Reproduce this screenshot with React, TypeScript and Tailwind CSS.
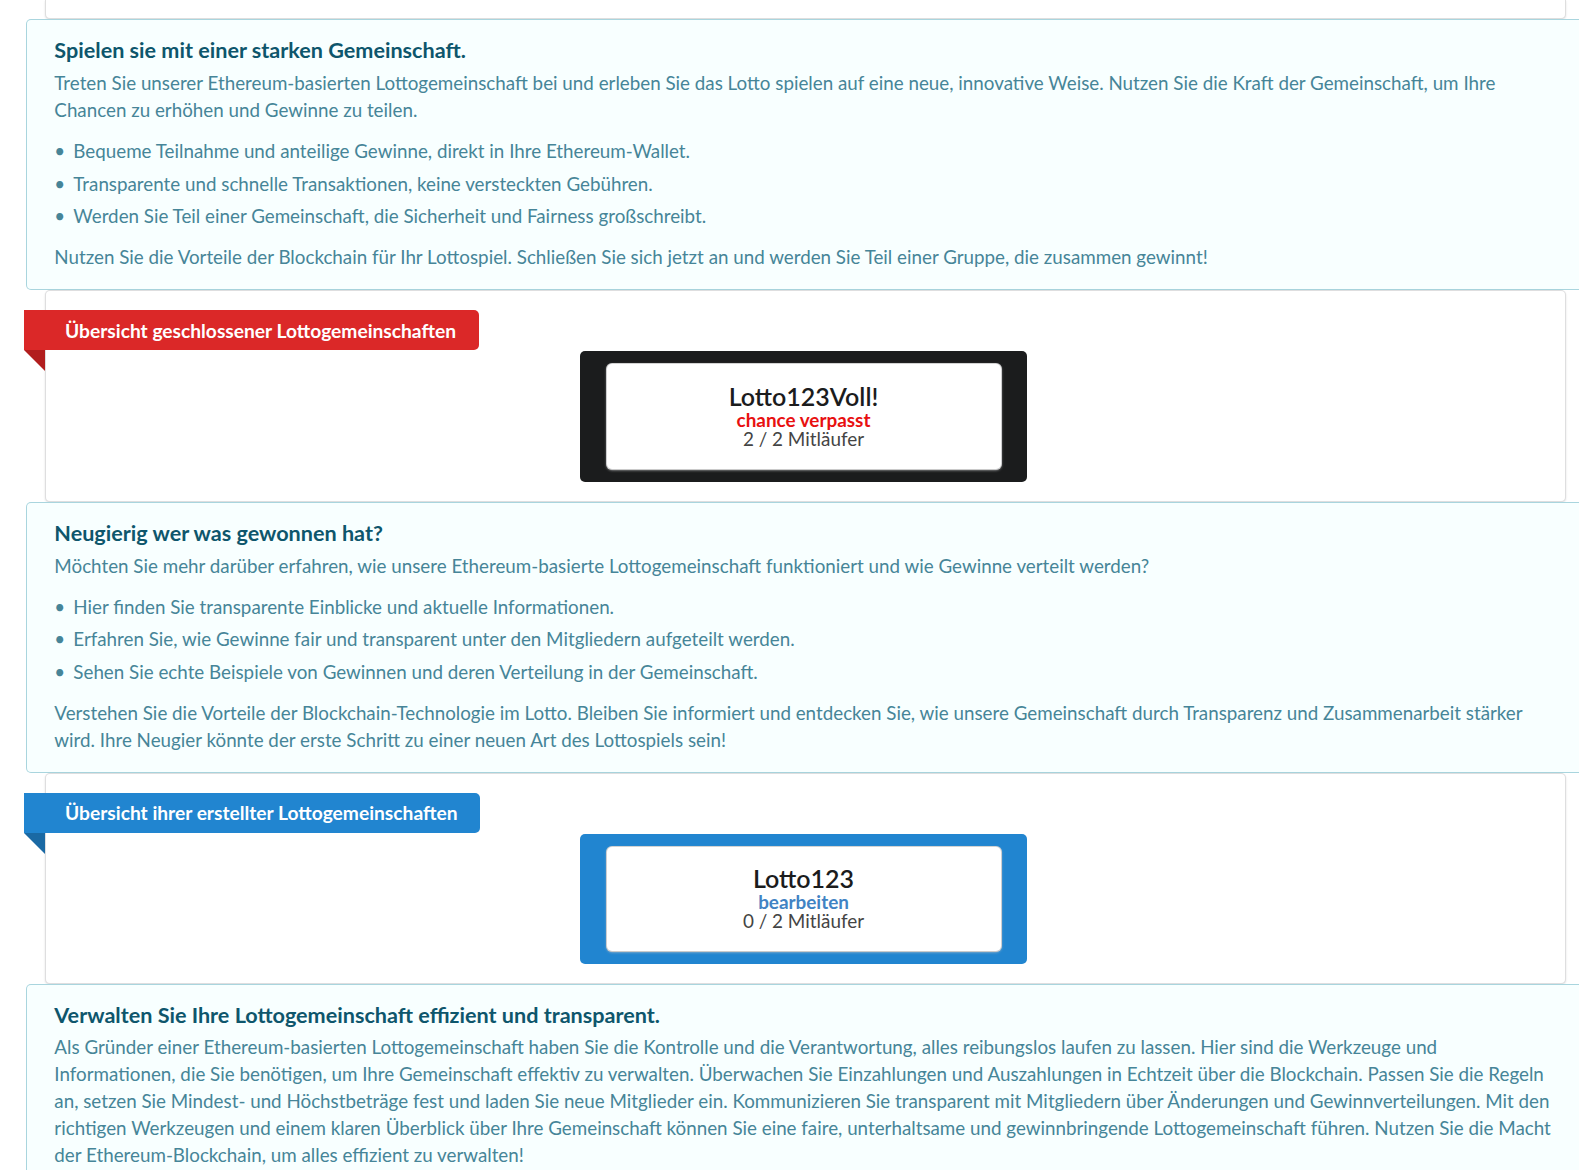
import React from "react";

function Message({
  title,
  children,
}: {
  title: string;
  children: React.ReactNode;
}) {
  return (
    <div className="-mx-[19px] rounded-[5px] bg-[#f8ffff] px-[28.35px] pb-[20px] pt-[19px] text-[18.8px] leading-[27px] text-[#468598] shadow-[inset_0_0_0_1px_#a9d5de]">
      <div className="-mt-px text-[21.6px] font-bold leading-[27px] text-[#0e566c]">
        {title}
      </div>
      {children}
    </div>
  );
}

function List({ items }: { items: string[] }) {
  return (
    <ul className="mt-[14px]">
      {items.map((t, i) => (
        <li
          key={i}
          className={
            "relative ml-[19px] " + (i === items.length - 1 ? "mb-0" : "mb-[5.6px]")
          }
        >
          <span className="absolute -left-[19px] top-0">•</span>
          {t}
        </li>
      ))}
    </ul>
  );
}

function Segment({
  label,
  color,
  fold,
  boxColor,
  title,
  sub,
  subColor,
  count,
}: {
  label: string;
  color: string;
  fold: string;
  boxColor: string;
  title: string;
  sub: string;
  subColor: string;
  count: string;
}) {
  return (
    <div className="rounded-[5px] border border-[rgba(34,36,38,0.15)] bg-white p-[19px] shadow-[0_1px_2px_0_rgba(34,36,38,0.15)]">
      <div
        className={
          "relative -ml-[41px] w-max rounded-r-[5px] py-[10.5px] pl-[41px] pr-[22.5px] text-[19.2px] font-bold leading-[19px] text-white " +
          color
        }
      >
        {label}
        <span
          className={
            "absolute left-0 top-full h-0 w-0 border-solid border-transparent border-l-0 border-t-0 border-r-[21px] border-b-[21px] " +
            fold
          }
        />
      </div>
      <div
        className={
          "relative right-[2px] mx-auto mt-px w-[447px] rounded-[5px] px-[26.5px] py-[13px] " +
          boxColor
        }
      >
        <div className="flex h-[104.5px] flex-col items-center rounded-[5px] bg-white pt-[17.5px] shadow-[0_1px_3px_0_#c4c4c5,0_0_0_1px_#d4d4d5]">
          <div className="text-[25px] font-semibold leading-[28px] text-[#1b1c1d]">
            {title}
          </div>
          <div className={"text-[18.9px] font-bold leading-[19px] " + subColor}>
            {sub}
          </div>
          <div className="text-[18.9px] leading-[19px] text-[#444]">{count}</div>
        </div>
      </div>
    </div>
  );
}

export default function App() {
  return (
    <div className="w-full overflow-hidden bg-white font-['Lato',sans-serif]">
      <div className="ml-[45px] w-[1521px]">
        <div className="h-[19px] rounded-b-[5px] border border-t-0 border-[rgba(34,36,38,0.15)] bg-white shadow-[0_1px_2px_0_rgba(34,36,38,0.15)]" />

        <Message title="Spielen sie mit einer starken Gemeinschaft.">
          <p className="mt-[5px]">
            Treten Sie unserer Ethereum-basierten Lottogemeinschaft bei und erleben Sie das
            Lotto spielen auf eine neue, innovative Weise. Nutzen Sie die Kraft der
            Gemeinschaft, um Ihre Chancen zu erhöhen und Gewinne zu teilen.
          </p>
          <List
            items={[
              "Bequeme Teilnahme und anteilige Gewinne, direkt in Ihre Ethereum-Wallet.",
              "Transparente und schnelle Transaktionen, keine versteckten Gebühren.",
              "Werden Sie Teil einer Gemeinschaft, die Sicherheit und Fairness großschreibt.",
            ]}
          />
          <p className="mt-[14px]">
            Nutzen Sie die Vorteile der Blockchain für Ihr Lottospiel. Schließen Sie sich
            jetzt an und werden Sie Teil einer Gruppe, die zusammen gewinnt!
          </p>
        </Message>

        <Segment
          label="Übersicht geschlossener Lottogemeinschaften"
          color="bg-[#db2828]"
          fold="border-r-[#b21e1e]"
          boxColor="bg-[#1b1c1d]"
          title="Lotto123Voll!"
          sub="chance verpasst"
          subColor="text-[#e81010]"
          count="2 / 2 Mitläufer"
        />

        <Message title="Neugierig wer was gewonnen hat?">
          <p className="mt-[5px]">
            Möchten Sie mehr darüber erfahren, wie unsere Ethereum-basierte
            Lottogemeinschaft funktioniert und wie Gewinne verteilt werden?
          </p>
          <List
            items={[
              "Hier finden Sie transparente Einblicke und aktuelle Informationen.",
              "Erfahren Sie, wie Gewinne fair und transparent unter den Mitgliedern aufgeteilt werden.",
              "Sehen Sie echte Beispiele von Gewinnen und deren Verteilung in der Gemeinschaft.",
            ]}
          />
          <p className="mt-[14px]">
            Verstehen Sie die Vorteile der Blockchain-Technologie im Lotto. Bleiben Sie
            informiert und entdecken Sie, wie unsere Gemeinschaft durch Transparenz und
            Zusammenarbeit stärker wird. Ihre Neugier könnte der erste Schritt zu einer
            neuen Art des Lottospiels sein!
          </p>
        </Message>

        <Segment
          label="Übersicht ihrer erstellter Lottogemeinschaften"
          color="bg-[#2185d0]"
          fold="border-r-[#1a69a4]"
          boxColor="bg-[#2185d0]"
          title="Lotto123"
          sub="bearbeiten"
          subColor="text-[#4183c4]"
          count="0 / 2 Mitläufer"
        />

        <Message title="Verwalten Sie Ihre Lottogemeinschaft effizient und transparent.">
          <p className="mt-[4px]">
            Als Gründer einer Ethereum-basierten Lottogemeinschaft haben Sie die Kontrolle
            und die Verantwortung, alles reibungslos laufen zu lassen. Hier sind die
            Werkzeuge und Informationen, die Sie benötigen, um Ihre Gemeinschaft effektiv zu
            verwalten. Überwachen Sie Einzahlungen und Auszahlungen in Echtzeit über die
            Blockchain. Passen Sie die Regeln an, setzen Sie Mindest- und Höchstbeträge fest
            und laden Sie neue Mitglieder ein. Kommunizieren Sie transparent mit Mitgliedern
            über Änderungen und Gewinnverteilungen. Mit den richtigen Werkzeugen und einem
            klaren Überblick über Ihre Gemeinschaft können Sie eine faire, unterhaltsame und
            gewinnbringende Lottogemeinschaft führen. Nutzen Sie die Macht der
            Ethereum-Blockchain, um alles effizient zu verwalten!
          </p>
        </Message>
      </div>
    </div>
  );
}
